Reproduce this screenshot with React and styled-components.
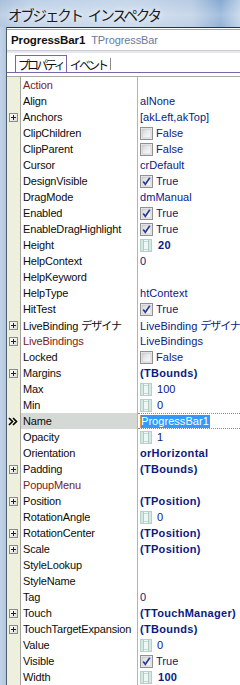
import React from "react";
import styled, { createGlobalStyle } from "styled-components";

const Global = createGlobalStyle`
  html, body { margin: 0; padding: 0; background: #ffffff; }
  #root { width: 240px; height: 685px; overflow: hidden; }
`;

const Window = styled.div`
  width: 240px;
  height: 685px;
  display: flex;
  flex-direction: column;
  overflow: hidden;
  font-family: "Liberation Sans", "Noto Sans CJK JP", sans-serif;
`;

const TitleBar = styled.div`
  height: 27px;
  flex: none;
  display: flex;
  align-items: center;
  padding-left: 8px;
  background:
    linear-gradient(180deg, rgba(255,255,255,0.0) 0%, rgba(255,255,255,0.25) 55%, rgba(255,255,255,0.1) 100%),
    linear-gradient(90deg, #a9c0db 0%, #bed1e7 12%, #c6d7ea 55%, #b7cbe3 80%, #86a9d2 92%, #bcd0e7 100%);
`;

const TitleText = styled.span`
  font-family: "Noto Sans CJK JP", sans-serif;
  font-size: 14.5px;
  letter-spacing: -2.2px;
  word-spacing: 5px;
  color: #1b1b1b;
  margin-top: 2px;
  text-shadow: 0 0 6px rgba(255,255,255,0.9);
`;

const Body = styled.div`
  flex: 1;
  display: flex;
  min-height: 0;
`;

const LeftFrame = styled.div`
  width: 6px;
  flex: none;
  background: linear-gradient(90deg, #c3d4e8, #b2c7e0);
  border-right: 1px solid #4e5b68;
`;

const Content = styled.div`
  flex: 1;
  display: flex;
  flex-direction: column;
  background: #ffffff;
  border-top: 1px solid #26303a;
  min-width: 0;
`;

const Combo = styled.div`
  margin-top: 1px;
  height: 20px;
  flex: none;
  display: flex;
  align-items: center;
  gap: 6px;
  padding-left: 4px;
  border-top: 1px solid #a4a8ac;
  border-bottom: 1px solid #c9cdd2;
  white-space: nowrap;
`;

const ComboName = styled.span`
  font-weight: bold;
  font-size: 11.5px;
  letter-spacing: -0.1px;
  color: #101010;
`;

const ComboType = styled.span`
  font-size: 11px;
  color: #687b9c;
  letter-spacing: -0.1px;
`;

const Band = styled.div`
  height: 2px;
  flex: none;
  background: #e7e7ef;
`;

const TabStrip = styled.div`
  height: 19px;
  flex: none;
  display: flex;
  align-items: flex-end;
  padding-left: 8px;
  border-bottom: 1px solid #7c63ad;
`;

const Tab = styled.div`
  height: 16px;
  display: flex;
  align-items: center;
  font-family: "Noto Sans CJK JP", sans-serif;
  font-size: 12px;
  letter-spacing: -2.9px;
  color: #111;
  ${(p) =>
    p.$active
      ? `border: 1px solid #7c63ad; border-bottom: none; background: #fff; padding: 0 3px 0 2px;`
      : `border-right: 1px solid #8a8a8a; height: 12px; margin-bottom: 2px; padding: 0 4px 0 3px;`}
`;

const Gap = styled.div`
  height: 3px;
  flex: none;
  border-bottom: 1px solid #a3aaa3;
`;

const Grid = styled.div`
  flex: 1;
  display: flex;
  flex-direction: column;
  overflow: hidden;
`;

const Row = styled.div`
  height: 16px;
  flex: none;
  display: flex;
  font-size: 11px;
  line-height: 16px;
`;

const Gutter = styled.div`
  width: 14px;
  flex: none;
  background: #efefdd;
  border-right: 1px solid #a2a29a;
  display: flex;
  align-items: center;
  justify-content: center;
  padding-right: 1px;
  box-sizing: border-box;
`;

const NameCell = styled.div`
  width: 114px;
  flex: none;
  padding-left: 2px;
  border-right: 1px solid #b4b4b4;
  background: ${(p) => (p.$selected ? "#d5d9d6" : "transparent")};
  color: ${(p) => (p.$ref ? "#7c2020" : "#0c0c0c")};
  white-space: nowrap;
  overflow: hidden;
  letter-spacing: -0.15px;
`;

const ValueCell = styled.div`
  flex: 1;
  min-width: 0;
  padding-left: 2px;
  display: flex;
  align-items: center;
  white-space: nowrap;
  overflow: hidden;
  color: #0b1a82;
  font-weight: ${(p) => (p.$bold ? "bold" : "normal")};
  letter-spacing: ${(p) => (p.$bold ? "0.3px" : "0.05px")};
  ${(p) =>
    p.$selected &&
    `border-top: 1px dotted #8a8a8a; border-bottom: 1px dotted #8a8a8a;`}
`;

const Selection = styled.span`
  background: #3399ff;
  color: #ffffff;
  line-height: 13px;
  padding: 0 1px 0 0;
  border-left: 1px solid #e89a3a;
`;

const Jp = styled.span`
  font-family: "Noto Sans CJK JP", sans-serif;
  font-size: 11px;
  letter-spacing: ${(p) => (p.$tight ? "-1.2px" : "-1px")};
`;

const ValueText = styled.span`
  margin-left: ${(p) => p.$offset || 0}px;
`;

const PlusBox = () => (
  <svg width="9" height="9" viewBox="0 0 9 9" style={{ display: "block" }}>
    <defs>
      <linearGradient id="pb" x1="0" y1="0" x2="1" y2="1">
        <stop offset="0" stopColor="#ffffff" />
        <stop offset="1" stopColor="#dcdcd4" />
      </linearGradient>
    </defs>
    <rect x="0.5" y="0.5" width="8" height="8" fill="url(#pb)" stroke="#8c8c8c" />
    <path d="M2 4.5H7M4.5 2V7" stroke="#222" strokeWidth="1" />
  </svg>
);

const Chevrons = () => (
  <svg width="10" height="9" viewBox="0 0 10 9" style={{ display: "block" }}>
    <path d="M1 1L4.5 4.5L1 8M5 1L8.5 4.5L5 8" stroke="#000" strokeWidth="1.6" fill="none" />
  </svg>
);

const CheckBox = ({ checked }) => (
  <svg width="13" height="13" viewBox="0 0 13 13" style={{ display: "block", flex: "none" }}>
    <defs>
      <linearGradient id="cb" x1="0" y1="0" x2="1" y2="1">
        <stop offset="0" stopColor="#d2d4d8" />
        <stop offset="0.6" stopColor="#f0f0f2" />
        <stop offset="1" stopColor="#fbfbfb" />
      </linearGradient>
    </defs>
    <rect x="0.5" y="0.5" width="12" height="12" fill="#f4f4f4" stroke="#8e9092" />
    <rect x="2" y="2" width="9" height="9" fill="url(#cb)" stroke="#b8babd" strokeWidth="0.6" />
    {checked && (
      <path d="M3.2 6.4L5.3 9.2L9.8 2.8" stroke="#2a3c9a" strokeWidth="1.7" fill="none" />
    )}
  </svg>
);

const SpinIcon = () => (
  <svg width="12" height="13" viewBox="0 0 12 13" style={{ display: "block", flex: "none" }}>
    <rect x="0.5" y="0.5" width="11" height="12" fill="#eef7f4" stroke="#b6d0c9" />
    <rect x="1" y="1" width="2" height="11" fill="#d6e8e3" />
    <rect x="9" y="1" width="2" height="11" fill="#d6e8e3" />
    <path d="M3.5 1V12M8.5 1V12" stroke="#b0ccc4" />
    <path d="M4 2.5H8M4 10.5H8" stroke="#c2dad3" />
  </svg>
);

const rows = [
  { n: "Action", ref: true, v: "" },
  { n: "Align", v: "alNone" },
  { n: "Anchors", plus: true, v: "[akLeft,akTop]" },
  { n: "ClipChildren", check: false },
  { n: "ClipParent", check: false },
  { n: "Cursor", v: "crDefault" },
  { n: "DesignVisible", check: true },
  { n: "DragMode", v: "dmManual" },
  { n: "Enabled", check: true },
  { n: "EnableDragHighlight", check: true },
  { n: "Height", spin: "20", bold: true },
  { n: "HelpContext", v: "0" },
  { n: "HelpKeyword", v: "" },
  { n: "HelpType", v: "htContext" },
  { n: "HitTest", check: true },
  { n: "LiveBinding", jp: "デザイナ", plus: true, v: "LiveBinding", vjp: "デザイナ" },
  { n: "LiveBindings", plus: true, ref: true, v: "LiveBindings" },
  { n: "Locked", check: false },
  { n: "Margins", plus: true, v: "(TBounds)", bold: true },
  { n: "Max", spin: "100" },
  { n: "Min", spin: "0" },
  { n: "Name", selected: true, v: "ProgressBar1" },
  { n: "Opacity", spin: "1" },
  { n: "Orientation", v: "orHorizontal", bold: true },
  { n: "Padding", plus: true, v: "(TBounds)", bold: true },
  { n: "PopupMenu", ref: true, v: "" },
  { n: "Position", plus: true, v: "(TPosition)", bold: true },
  { n: "RotationAngle", spin: "0" },
  { n: "RotationCenter", plus: true, v: "(TPosition)", bold: true },
  { n: "Scale", plus: true, v: "(TPosition)", bold: true },
  { n: "StyleLookup", v: "" },
  { n: "StyleName", v: "" },
  { n: "Tag", v: "0" },
  { n: "Touch", plus: true, v: "(TTouchManager)", bold: true },
  { n: "TouchTargetExpansion", plus: true, v: "(TBounds)", bold: true },
  { n: "Value", spin: "0" },
  { n: "Visible", check: true },
  { n: "Width", spin: "100", bold: true },
];

function renderValue(r) {
  if (r.check !== undefined) {
    return (
      <>
        <CheckBox checked={r.check} />
        <ValueText $offset={3}>{r.check ? "True" : "False"}</ValueText>
      </>
    );
  }
  if (r.spin !== undefined) {
    return (
      <>
        <SpinIcon />
        <ValueText $offset={r.bold ? 6 : 5}>{r.spin}</ValueText>
      </>
    );
  }
  if (r.selected) return <Selection>{r.v}</Selection>;
  return (
    <ValueText>
      {r.v}
      {r.vjp && (
        <>
          {" "}
          <Jp $tight>{r.vjp}</Jp>
        </>
      )}
    </ValueText>
  );
}

export default function App() {
  return (
    <Window>
      <Global />
      <TitleBar>
        <TitleText>オブジェクト インスペクタ</TitleText>
      </TitleBar>
      <Body>
        <LeftFrame />
        <Content>
          <Combo>
            <ComboName>ProgressBar1</ComboName>
            <ComboType>TProgressBar</ComboType>
          </Combo>
          <Band />
          <TabStrip>
            <Tab $active>プロパティ</Tab>
            <Tab>イベント</Tab>
          </TabStrip>
          <Gap />
          <Grid>
            {rows.map((r) => (
              <Row key={r.n + (r.jp || "")}>
                <Gutter>
                  {r.plus && <PlusBox />}
                  {r.selected && <Chevrons />}
                </Gutter>
                <NameCell $ref={r.ref} $selected={r.selected}>
                  {r.n}
                  {r.jp && (
                    <>
                      {" "}
                      <Jp>{r.jp}</Jp>
                    </>
                  )}
                </NameCell>
                <ValueCell $bold={r.bold} $selected={r.selected}>
                  {renderValue(r)}
                </ValueCell>
              </Row>
            ))}
          </Grid>
        </Content>
      </Body>
    </Window>
  );
}
